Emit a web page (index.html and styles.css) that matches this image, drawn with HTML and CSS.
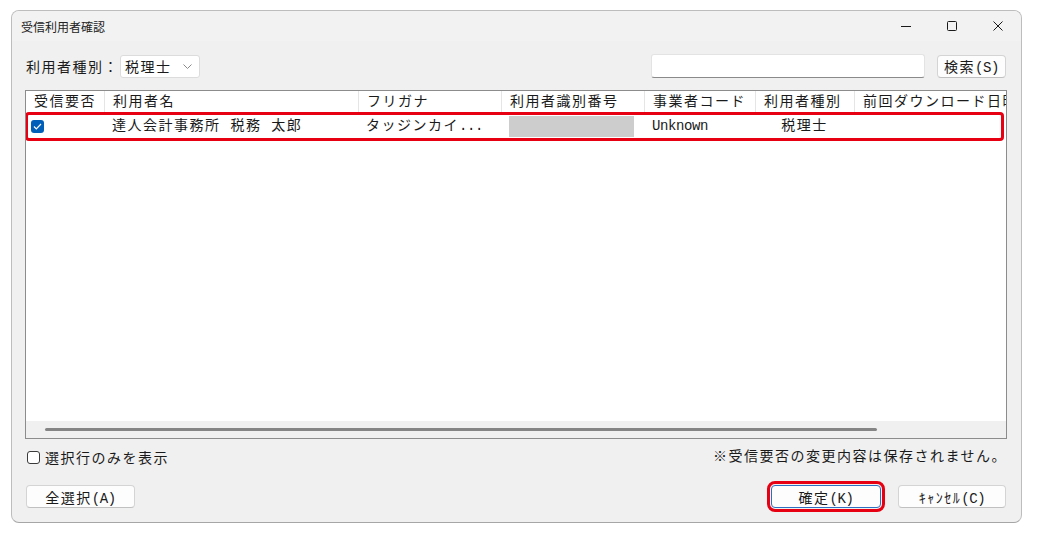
FILE: index.html
```html
<!DOCTYPE html>
<html lang="ja">
<head>
<meta charset="UTF-8">
<title>受信利用者確認</title>
<link rel="stylesheet" href="styles.css">
</head>
<body>
<div class="window">
    <div class="titlebar">
        <span class="title">受信利用者確認</span>
        <div class="caption">
            <span class="cap-btn"><svg width="10" height="10" viewBox="0 0 10 10"><path d="M0 5.5h10" stroke="#1a1a1a" stroke-width="1"/></svg></span>
            <span class="cap-btn"><svg width="10" height="10" viewBox="0 0 10 10"><rect x="0.5" y="0.5" width="9" height="9" rx="1" fill="none" stroke="#1a1a1a" stroke-width="1"/></svg></span>
            <span class="cap-btn"><svg width="10" height="10" viewBox="0 0 10 10"><path d="M0.5 0.5l9 9M9.5 0.5l-9 9" stroke="#1a1a1a" stroke-width="1"/></svg></span>
        </div>
    </div>
    <div class="content">
        <div class="toolbar">
            <span class="label">利用者種別：</span>
            <div class="select">
                <span>税理士</span>
                <svg width="9" height="5" viewBox="0 0 9 5"><path d="M0.5 0.5l4 4 4-4" fill="none" stroke="#8a8a8a" stroke-width="1"/></svg>
            </div>
            <div class="search"></div>
            <button class="btn btn-search">検索<span class="en">(S)</span></button>
        </div>

        <div class="list">
            <div class="cols head">
                <span>受信要否</span>
                <span>利用者名</span>
                <span>フリガナ</span>
                <span>利用者識別番号</span>
                <span>事業者コード</span>
                <span>利用者種別</span>
                <span>前回ダウンロード日時</span>
            </div>
            <div class="cols row">
                <span><i class="tick"><svg width="9" height="7" viewBox="0 0 9 7"><path d="M1 3.5l2.3 2.3L8 1" fill="none" stroke="#fff" stroke-width="1.2"/></svg></i></span>
                <span>達人会計事務所 税務 太郎</span>
                <span>タッジンカイ<span class="en">...</span></span>
                <span><i class="masked"></i></span>
                <span class="en">Unknown</span>
                <span class="center">税理士</span>
                <span></span>
            </div>
            <div class="list-body"></div>
            <div class="hscroll"><div class="thumb"></div></div>
            <div class="mark"></div>
        </div>

        <div class="options">
            <label class="check"><i class="box"></i>選択行のみを表示</label>
            <span class="note">※受信要否の変更内容は保存されません。</span>
        </div>

        <div class="actions">
            <button class="btn btn-wide">全選択<span class="en">(A)</span></button>
            <span class="spacer"></span>
            <button class="btn btn-wide primary">確定<span class="en">(K)</span></button>
            <button class="btn btn-wide">ｷｬﾝｾﾙ<span class="en">(C)</span></button>
        </div>
    </div>
</div>
</body>
</html>
```

FILE: styles.css
```css
* { box-sizing: border-box; }
body {
    margin: 0;
    background: #fff;
    font-family: "Liberation Mono", "Noto Sans CJK JP", monospace;
    font-size: 14px;
    color: #1a1a1a;
}
/* dialog frame */
.window {
    margin: 10px 0 0 11px;
    width: 1011px;
    height: 513px;
    background: #f0f0f0;
    border: 1px solid #bdbdbd;
    border-bottom-color: #a6a6a6;
    border-radius: 8px;
    display: flex;
    flex-direction: column;
    overflow: hidden;
}
.titlebar {
    height: 30px;
    flex: none;
    display: flex;
    align-items: center;
    background: #f2f2f2;
}
.title {
    padding-left: 9px;
    font-family: "Noto Sans CJK JP", sans-serif;
    font-size: 12px;
    color: #222;
}
.caption { margin-left: auto; display: flex; height: 100%; }
.cap-btn {
    width: 46px;
    display: flex;
    align-items: center;
    justify-content: center;
}
.content {
    padding: 13px 14px 0 13px;
    letter-spacing: 1.5px;
}
.en { letter-spacing: -0.4px; }

/* top row */
.toolbar {
    height: 24px;
    display: flex;
    align-items: center;
}
.label { margin-left: 1px; }
.select {
    margin-left: 1px;
    width: 80px;
    height: 23px;
    background: #fff;
    border: 1px solid #dcdcdc;
    border-radius: 3px;
    display: flex;
    align-items: center;
    padding: 0 7px 0 4px;
    justify-content: space-between;
}
.search {
    margin-left: auto;
    width: 274px;
    height: 24px;
    background: #fff;
    border: 1px solid #e3e3e3;
    border-bottom-color: #8a8a8a;
    border-radius: 3px;
}
.btn {
    font: inherit;
    color: #1a1a1a;
    height: 23px;
    padding: 0;
    background: #fdfdfd;
    border: 1px solid #d4d4d4;
    border-bottom-color: #c0c0c0;
    border-radius: 4px;
    letter-spacing: 1.5px;
}
.btn-search { margin: 0 1px 0 12px; width: 69px; }

/* list view */
.list {
    position: relative;
    margin-top: 12px;
    height: 349px;
    background: #fff;
    border: 1px solid #8c8c8c;
    display: flex;
    flex-direction: column;
    overflow: hidden;
}
.cols {
    display: grid;
    grid-template-columns: 78px 254px 143px 143px 111px 99px 200px;
    white-space: nowrap;
}
.head { height: 22px; flex: none; }
.head span {
    padding-left: 8px;
    line-height: 22px;
    border-left: 1px solid #e5e5e5;
    overflow: hidden;
}
.head span:first-child { border-left: 0; }
.row { height: 26px; flex: none; align-items: center; }
.row > span { padding-left: 8px; line-height: 24px; }
.row > span:first-child { padding-left: 5px; }
.row > span.center { padding-left: 0; text-align: center; }
.tick {
    width: 13px;
    height: 13px;
    border-radius: 3px;
    background: #005fb8;
    display: flex;
    align-items: center;
    justify-content: center;
}
.masked {
    display: block;
    width: 125px;
    height: 21px;
    background: #cdcdcd;
}
.list-body { flex: 1; }
.hscroll {
    height: 17px;
    flex: none;
    background: #f0f0f0;
    display: flex;
    align-items: center;
    padding-left: 19px;
}
.thumb {
    width: 832px;
    height: 3px;
    background: #858585;
    border-radius: 2px;
}
/* callout on the selected row */
.mark {
    position: absolute;
    left: -1px;
    top: 21px;
    width: 979px;
    height: 29px;
    border: 3px solid #e60012;
    border-radius: 4px;
}

/* footer */
.options {
    margin-top: 9px;
    height: 18px;
    display: flex;
    align-items: center;
    justify-content: space-between;
}
.check { display: flex; align-items: center; gap: 5px; margin-left: 2px; }
.box {
    width: 13px;
    height: 13px;
    background: #fff;
    border: 1px solid #3a3a3a;
    border-radius: 3px;
}
.note { margin-right: 0; margin-top: -4px; }
.actions {
    margin-top: 19px;
    display: flex;
    align-items: center;
}
.actions .btn { width: 109px; margin-left: 1px; }
.spacer { flex: 1; }
.actions .primary {
    width: 110px;
    border-color: #2d6fc0;
    outline: 3px solid #e60012;
    outline-offset: 1px;
}
.actions .btn:last-child { width: 108px; margin: 0 1px 0 17px; }
```
